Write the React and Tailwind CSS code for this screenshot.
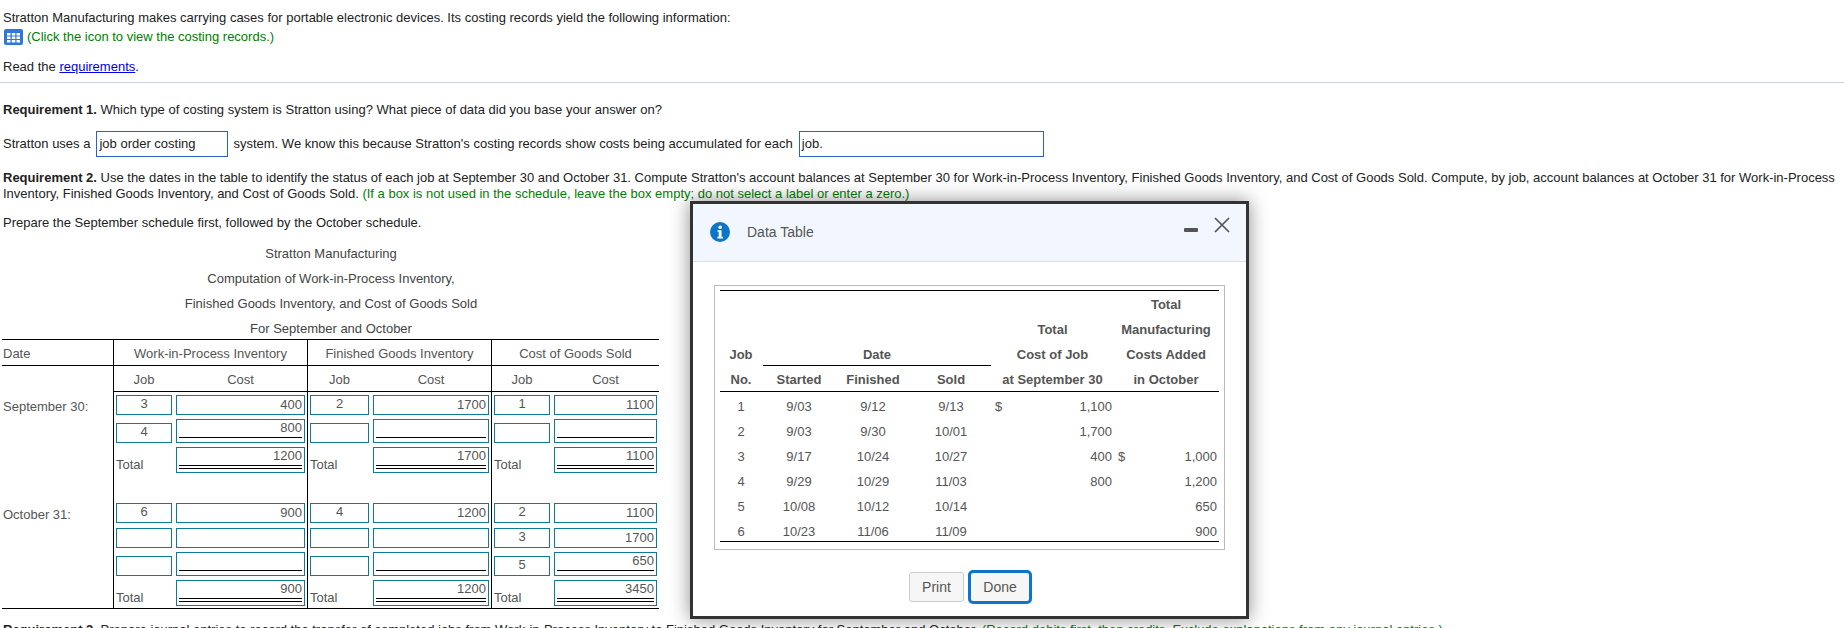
import React from "react"

function CostBox({ cost, type, width }) {
  return (
    <div className={`flex flex-col border border-[#0d7a9a] px-[2px] ${width} ${type === "plain" ? "h-[20px]" : type === "single" ? "h-[24px]" : "h-[26px]"}`}>
      <div className={`text-right text-[#555] ${type === "plain" ? "leading-[17px]" : "leading-[16px]"} h-[16px]`}>{cost}</div>
      {type === "single" && <div className="mt-[1px] border-t border-black" />}
      {type === "total" && <div className="mt-[1px] h-[4px] border-y border-black" />}
    </div>
  )
}

function JobBox({ job, type, width }) {
  if (type === "total") {
    return <div className={`${width} h-[26px] pt-[10px] leading-[16px] text-[#555]`}>Total</div>
  }
  return (
    <div className={`${width} ${type === "single" ? "h-[24px] pt-[4px]" : "h-[20px]"}`}>
      <div className="h-[20px] border border-[#0d7a9a] text-center leading-[16px] text-[#555]">{job}</div>
    </div>
  )
}

function Group({ rows, jobW, costW }) {
  return (
    <div className="flex flex-col pl-[2px] pt-[3px] pb-[2px]">
      {rows.map((r, i) => (
        <div key={i} className={`flex gap-[4px] ${r.mt || ""}`}>
          <JobBox job={r.job} type={r.type} width={jobW} />
          <CostBox cost={r.cost} type={r.type} width={costW} />
        </div>
      ))}
    </div>
  )
}

const wip = [
  { job: "3", cost: "400", type: "plain" },
  { job: "4", cost: "800", type: "single", mt: "mt-[4px]" },
  { cost: "1200", type: "total", mt: "mt-[4px]" },
  { job: "6", cost: "900", type: "plain", mt: "mt-[30px]" },
  { job: "", cost: "", type: "plain", mt: "mt-[5px]" },
  { job: "", cost: "", type: "single", mt: "mt-[4px]" },
  { cost: "900", type: "total", mt: "mt-[4px]" },
]
const fg = [
  { job: "2", cost: "1700", type: "plain" },
  { job: "", cost: "", type: "single", mt: "mt-[4px]" },
  { cost: "1700", type: "total", mt: "mt-[4px]" },
  { job: "4", cost: "1200", type: "plain", mt: "mt-[30px]" },
  { job: "", cost: "", type: "plain", mt: "mt-[5px]" },
  { job: "", cost: "", type: "single", mt: "mt-[4px]" },
  { cost: "1200", type: "total", mt: "mt-[4px]" },
]
const cogs = [
  { job: "1", cost: "1100", type: "plain" },
  { job: "", cost: "", type: "single", mt: "mt-[4px]" },
  { cost: "1100", type: "total", mt: "mt-[4px]" },
  { job: "2", cost: "1100", type: "plain", mt: "mt-[30px]" },
  { job: "3", cost: "1700", type: "plain", mt: "mt-[5px]" },
  { job: "5", cost: "650", type: "single", mt: "mt-[4px]" },
  { cost: "3450", type: "total", mt: "mt-[4px]" },
]

const dataRows = [
  ["1", "9/03", "9/12", "9/13", "$", "1,100", "", ""],
  ["2", "9/03", "9/30", "10/01", "", "1,700", "", ""],
  ["3", "9/17", "10/24", "10/27", "", "400", "$", "1,000"],
  ["4", "9/29", "10/29", "11/03", "", "800", "", "1,200"],
  ["5", "10/08", "10/12", "10/14", "", "", "", "650"],
  ["6", "10/23", "11/06", "11/09", "", "", "", "900"],
]

function DataTableModal() {
  const th = "text-center font-bold h-[25px] leading-[28px]"
  return (
    <div className="absolute left-[690px] top-[201px] h-[418px] w-[559px] border-[3px] border-[#333] bg-white shadow-[0_0_18px_rgba(0,0,0,0.45)]">
      <div className="relative flex h-[58px] items-center gap-[17px] border-b border-[#cfe3f2] bg-[#f2f7ff] pl-[17px] pb-[1px]">
        <svg width="20" height="20" viewBox="0 0 20 20">
          <circle cx="10" cy="10" r="10" fill="#0b76c8" />
          <circle cx="10.2" cy="5.2" r="1.8" fill="#fff" />
          <path d="M7.5 8.2h4v6.6h1.4v1.6H7.4v-1.6h1.3v-5H7.5z" fill="#fff" />
        </svg>
        <span className="text-[14px] text-[#555]">Data Table</span>
        <div className="absolute left-[491px] top-[24px] h-[4px] w-[14px] rounded-[1px] bg-[#555]" />
        <svg className="absolute left-[521px] top-[13px]" width="16" height="16" viewBox="0 0 16 16">
          <path d="M1 1l14 14M15 1L1 15" stroke="#555" strokeWidth="1.7" fill="none" />
        </svg>
      </div>

      <div className="ml-[21px] mt-[23px] h-[265px] w-[511px] border border-[#bbb] px-[5px] pt-[4px] text-[#555]">
        <div className="grid grid-cols-[42px_74px_74px_82px_121px_106px] border-y border-black">
          <div className="col-span-5 h-[25px]" />
          <div className={th}>Total</div>

          <div className="col-span-4 h-[25px]" />
          <div className={th}>Total</div>
          <div className={th}>Manufacturing</div>

          <div className={th}>Job</div>
          <div className="col-span-3 ml-[1px] mr-[1px] h-[25px] border-b border-black text-center font-bold leading-[27px]">Date</div>
          <div className={th}>Cost of Job</div>
          <div className={th}>Costs Added</div>

          <div className={th}>No.</div>
          <div className={th}>Started</div>
          <div className={th}>Finished</div>
          <div className={th}>Sold</div>
          <div className={th}>at September 30</div>
          <div className={th}>in October</div>
        </div>
        <div className="h-[150px] border-b border-black pt-[2px]">
          {dataRows.map((r) => (
            <div key={r[0]} className="grid h-[25px] grid-cols-[42px_74px_74px_82px_121px_106px] items-center">
              <div className="text-center">{r[0]}</div>
              <div className="text-center">{r[1]}</div>
              <div className="text-center">{r[2]}</div>
              <div className="text-center">{r[3]}</div>
              <div className="flex justify-between pl-[3px] pr-[1px]">
                <span>{r[4]}</span>
                <span>{r[5]}</span>
              </div>
              <div className="flex justify-between pl-[5px] pr-[2px]">
                <span>{r[6]}</span>
                <span>{r[7]}</span>
              </div>
            </div>
          ))}
        </div>
      </div>

      <div className="mt-[20px] flex items-center gap-[4px] pl-[216px]">
        <button className="h-[30px] w-[55px] rounded-[3px] border border-[#ccc] bg-[#f6f6f6] text-[14px] text-[#555]">Print</button>
        <button className="h-[34px] w-[64px] rounded-[5px] border-[3px] border-[#0f75c9] bg-[#f6f6f6] text-[14px] text-[#555]">Done</button>
      </div>
    </div>
  )
}

export default function App() {
  return (
    <div className="relative h-[628px] w-[1844px] overflow-hidden bg-white pt-[10px] text-[13px] leading-[16px] text-[#222] [font-family:'Liberation_Sans',Arial,sans-serif]">
      <p className="pl-[3px]">Stratton Manufacturing makes carrying cases for portable electronic devices. Its costing records yield the following information:</p>
      <div className="mt-[3px] flex items-center gap-[4px] pl-[4px] text-[#008000]">
        <svg width="19" height="16" viewBox="0 0 19 16">
          <rect x="0" y="0" width="19" height="16" rx="2" fill="#2f78d8" />
          <path d="M3 4h3.5v2.5H3zM7.8 4h3.5v2.5H7.8zM12.5 4H16v2.5h-3.5zM3 7.5h3.5V10H3zM7.8 7.5h3.5V10H7.8zM12.5 7.5H16V10h-3.5zM3 11h3.5v2.5H3zM7.8 11h3.5v2.5H7.8zM12.5 11H16v2.5h-3.5z" fill="#fff" />
        </svg>
        <span>(Click the icon to view the costing records.)</span>
      </div>
      <p className="mt-[14px] pl-[3px]">Read the <a className="text-[#0000ee] underline">requirements</a>.</p>
      <hr className="mt-[7px] border-t border-[#ccd3e0]" />

      <p className="mt-[19px] pl-[3px]"><b>Requirement 1.</b> Which type of costing system is Stratton using? What piece of data did you base your answer on?</p>
      <div className="mt-[13px] flex items-center pl-[3px]">
        <span>Stratton uses a</span>
        <div className="ml-[6px] h-[26px] w-[132px] border border-[#2a62c4] pl-[2px] leading-[24px]">job order costing</div>
        <span className="ml-[5px]">system. We know this because Stratton's costing records show costs being accumulated for each</span>
        <div className="ml-[6px] h-[26px] w-[245px] border border-[#2a62c4] pl-[2px] leading-[24px]">job.</div>
      </div>

      <p className="mt-[13px] pl-[3px] pr-[4px]">
        <b>Requirement 2.</b> Use the dates in the table to identify the status of each job at September 30 and October 31. Compute Stratton's account balances at September 30 for Work-in-Process Inventory, Finished Goods Inventory, and Cost of Goods Sold. Compute, by job, account balances at October 31 for Work-in-Process Inventory, Finished Goods Inventory, and Cost of Goods Sold.{" "}
        <span className="text-[#008000]">(If a box is not used in the schedule, leave the box empty; do not select a label or enter a zero.)</span>
      </p>
      <p className="mt-[13px] pl-[3px]">Prepare the September schedule first, followed by the October schedule.</p>

      <div className="mt-[9px] w-[662px] pt-[1px] text-center text-[#444] [&>div]:h-[25px] [&>div]:leading-[26px]">
        <div>Stratton Manufacturing</div>
        <div>Computation of Work-in-Process Inventory,</div>
        <div>Finished Goods Inventory, and Cost of Goods Sold</div>
        <div className="-mb-[2px]">For September and October</div>
      </div>

      <div className="ml-[2px] w-[657px] border-y border-black text-[#555]">
        <div className="flex h-[26px] border-b border-black leading-[27px]">
          <div className="w-[111px] pl-[1px]">Date</div>
          <div className="w-[194px] border-l border-black text-center">Work-in-Process Inventory</div>
          <div className="w-[184px] border-l border-black text-center">Finished Goods Inventory</div>
          <div className="flex-1 border-l border-black text-center">Cost of Goods Sold</div>
        </div>
        <div className="flex">
          <div className="w-[111px]">
            <div className="h-[26px]" />
            <div className="pl-[1px] pt-[7px]">September 30:</div>
            <div className="pl-[1px] pt-[92px]">October 31:</div>
          </div>
          <div className="flex w-[194px] flex-col border-l border-black">
            <div className="flex h-[26px] gap-[4px] border-b border-black pl-[2px] text-center leading-[28px]">
              <div className="w-[56px]">Job</div>
              <div className="w-[129px]">Cost</div>
            </div>
            <Group rows={wip} jobW="w-[56px]" costW="w-[129px]" />
          </div>
          <div className="flex w-[184px] flex-col border-l border-black">
            <div className="flex h-[26px] gap-[4px] border-b border-black pl-[2px] text-center leading-[28px]">
              <div className="w-[59px]">Job</div>
              <div className="w-[116px]">Cost</div>
            </div>
            <Group rows={fg} jobW="w-[59px]" costW="w-[116px]" />
          </div>
          <div className="flex flex-1 flex-col border-l border-black">
            <div className="flex h-[26px] gap-[4px] border-b border-black pl-[2px] text-center leading-[28px]">
              <div className="w-[56px]">Job</div>
              <div className="w-[103px]">Cost</div>
            </div>
            <Group rows={cogs} jobW="w-[56px]" costW="w-[103px]" />
          </div>
        </div>
      </div>

      <p className="mt-[13px] pl-[3px]">
        <b>Requirement 3.</b> Prepare journal entries to record the transfer of completed jobs from Work-in-Process Inventory to Finished Goods Inventory for September and October.{" "}
        <span className="text-[#008000]">(Record debits first, then credits. Exclude explanations from any journal entries.)</span>
      </p>

      <DataTableModal />
    </div>
  )
}
